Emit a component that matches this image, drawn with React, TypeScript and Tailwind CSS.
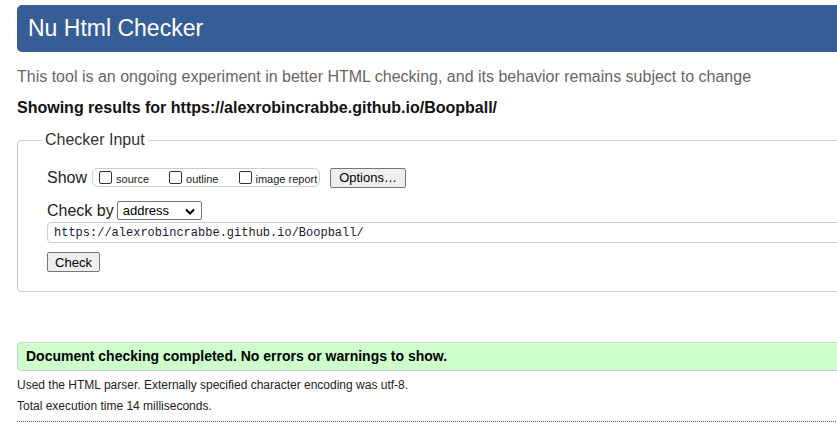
export default function App() {
  return (
    <div className="w-[837px] h-[430px] overflow-hidden bg-white font-['Liberation_Sans',Arial,sans-serif] text-black">
      <div className="w-[900px] pl-[17px] pt-[5px]">
        {/* Title bar */}
        <header className="h-[47px] rounded-[5px] bg-[#365d95] flex items-center pl-[11px]">
          <h1 className="text-[23px] leading-none text-white">Nu Html Checker</h1>
        </header>

        <p className="mt-[16px] text-[16px] leading-[18px] text-[#666]">
          This tool is an ongoing experiment in better HTML checking, and its behavior remains subject to change
        </p>
        <p className="mt-[13px] text-[16px] leading-[18px] font-bold text-[#111]">
          Showing results for https://alexrobincrabbe.github.io/Boopball/
        </p>

        {/* Checker input */}
        <fieldset className="mt-[14px] border border-[#ccc] rounded-[4px] px-[29px] pb-[17px]">
          <legend className="-ml-[5px] px-[3px] text-[16px] leading-[18px] text-[#333]">Checker Input</legend>

          <div className="mt-[18px] h-[21px] flex items-center">
            <span className="text-[16px] text-[#222]">Show</span>
            <div className="ml-[5px] h-[19px] w-[228px] border border-[#ccc] rounded-[6px] flex items-center pl-[6px] text-[11px] text-[#222]">
              <label className="flex items-center mr-[20px]">
                <span className="w-[13px] h-[13px] border border-[#333] rounded-[2px] bg-white" />
                <span className="ml-[4px] mt-[3px]">source</span>
              </label>
              <label className="flex items-center mr-[21px]">
                <span className="w-[13px] h-[13px] border border-[#333] rounded-[2px] bg-white" />
                <span className="ml-[4px] mt-[3px]">outline</span>
              </label>
              <label className="flex items-center">
                <span className="w-[13px] h-[13px] border border-[#333] rounded-[2px] bg-white" />
                <span className="ml-[3px] mt-[3px]">image report</span>
              </label>
            </div>
            <button className="ml-[10px] h-[20px] w-[76px] border border-[#767676] rounded-[2px] bg-[#efefef] text-[13px] leading-none text-black">
              Options…
            </button>
          </div>

          <div className="mt-[13px] h-[19px] flex items-center">
            <span className="text-[16px] text-[#222]">Check by</span>
            <div className="ml-[3px] h-[19px] w-[85px] border border-[#767676] rounded-[2px] bg-white flex items-center pl-[5px] pr-[6px] text-[13px] text-black">
              <span className="flex-1">address</span>
              <svg width="10" height="7" viewBox="0 0 10 7" className="mt-[1px]">
                <path d="M1 1.5 L5 5.5 L9 1.5" fill="none" stroke="#000" strokeWidth="2" />
              </svg>
            </div>
          </div>

          <div className="mt-[2px] h-[21px] border border-[#ccc] rounded-[4px] flex items-center pl-[6px] font-['Liberation_Mono',monospace] text-[12px] text-[#1a1a2e]">
            https://alexrobincrabbe.github.io/Boopball/
          </div>

          <button className="mt-[9px] h-[20px] w-[53px] border border-[#767676] rounded-[2px] bg-[#efefef] text-[13px] leading-none text-black">
            Check
          </button>
        </fieldset>

        {/* Result */}
        <div className="mt-[50px] h-[29px] border border-[#ccc] rounded-[4px] bg-[#ccffcc] flex items-center pl-[8px]">
          <span className="text-[14px] font-bold text-black">Document checking completed. No errors or warnings to show.</span>
        </div>
        <p className="mt-[6px] text-[12px] leading-[16px] text-[#222]">
          Used the HTML parser. Externally specified character encoding was utf-8.
        </p>
        <p className="mt-[5px] text-[12px] leading-[16px] text-[#222]">Total execution time 14 milliseconds.</p>
        <hr className="mt-[7px] border-0 border-t border-dotted border-[#666]" />
      </div>
    </div>
  );
}
